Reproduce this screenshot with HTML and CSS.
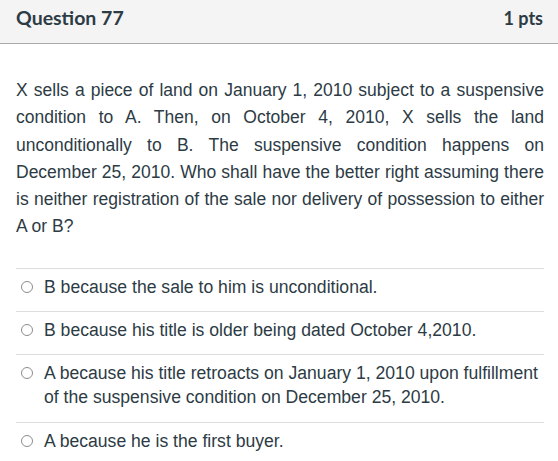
FILE: index.html
```html
<!DOCTYPE html>
<html>
<head>
<meta charset="utf-8">
<link rel="stylesheet" href="styles.css">
</head>
<body>
<div class="question">
  <div class="header">
    <span class="title">Question 77</span>
    <span class="pts">1 pts</span>
  </div>
  <div class="content">
    <p class="text">X sells a piece of land on January 1, 2010 subject to a suspensive condition to A. Then, on October 4, 2010, X sells the land unconditionally to B. The suspensive condition happens on December 25, 2010. Who shall have the better right assuming there is neither registration of the sale nor delivery of possession to either A or B?</p>
    <div class="answers">
      <label class="answer"><span class="radio"></span><span class="label">B because the sale to him is unconditional.</span></label>
      <label class="answer"><span class="radio"></span><span class="label">B because his title is older being dated October 4,2010.</span></label>
      <label class="answer"><span class="radio"></span><span class="label">A because his title retroacts on January 1, 2010 upon fulfillment of the suspensive condition on December 25, 2010.</span></label>
      <label class="answer"><span class="radio"></span><span class="label">A because he is the first buyer.</span></label>
    </div>
  </div>
</div>
</body>
</html>
```
FILE: styles.css
```css
html, body {
  margin: 0;
  padding: 0;
  background: #fff;
}
.question {
  width: 558px;
  color: #2d3b45;
}
.header {
  display: flex;
  justify-content: space-between;
  align-items: center;
  height: 35px;
  padding: 0 15px 8px 16px;
  background: #f4f4f4;
  border-bottom: 1px solid #aaaaaa;
  font-family: Lato, "Liberation Sans", sans-serif;
  font-weight: bold;
}
.title {
  font-size: 19.5px;
}
.pts {
  font-size: 18px;
}
.content {
  padding: 0 14px 0 16px;
}
.text {
  margin: 33px 0 27px;
  font-family: "Liberation Sans", Arial, sans-serif;
  font-size: 17.5px;
  line-height: 27.3px;
  text-align: justify;
}
.answers {
  font-family: "Liberation Sans", Arial, sans-serif;
  font-size: 17.6px;
  line-height: 24px;
}
.answer {
  display: flex;
  align-items: flex-start;
  border-top: 1px solid #dddddd;
  padding: 6px 0 12.3px 5px;
}
.radio {
  flex: none;
  width: 10px;
  height: 10px;
  border: 1px solid #8c8c8c;
  border-radius: 50%;
  margin: 6px 11px 0 0;
  background: #fff;
}
.label {
  flex: 1;
}
```
